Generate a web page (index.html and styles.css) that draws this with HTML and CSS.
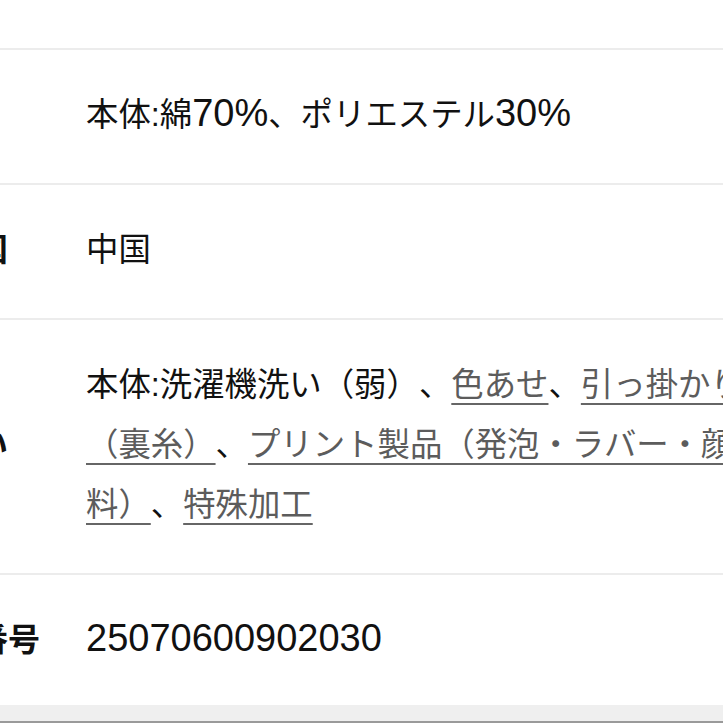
FILE: index.html
```html
<!DOCTYPE html>
<html lang="ja">
<head>
<meta charset="utf-8">
<title>商品情報</title>
<link rel="stylesheet" href="styles.css">
</head>
<body>
<div class="spec">
  <div class="spec-top"></div>
  <div class="row">
    <div class="label">素材</div>
    <div class="value">本体:綿<span class="num">70%</span>、ポリエステル<span class="num">30%</span></div>
  </div>
  <div class="row">
    <div class="label">原産国</div>
    <div class="value">中国</div>
  </div>
  <div class="row">
    <div class="label">取扱い</div>
    <div class="value">本体:洗濯機洗い（弱）、<a href="#">色あせ</a>、<a href="#">引っ掛かり（裏糸）</a>、<a href="#">プリント製品（発泡・ラバー・顔料）</a>、<a href="#">特殊加工</a></div>
  </div>
  <div class="row">
    <div class="label">商品番号</div>
    <div class="value"><span class="num">25070600902030</span></div>
  </div>
</div>
<div class="bottom-bar"></div>
</body>
</html>
```

FILE: styles.css
```css
html, body {
  margin: 0;
  padding: 0;
  background: #ffffff;
  overflow: hidden;
}

body {
  width: 723px;
  height: 723px;
  font-family: "Liberation Sans", "Noto Sans CJK JP", sans-serif;
  color: #111111;
}

.spec {
  margin-left: -88px;
  width: 860px;
}

.spec-top {
  height: 48px;
}

.row {
  display: flex;
  align-items: center;
  border-top: 2px solid #ececec;
  padding: 35px 0 38px;
}

.label {
  width: 174px;
  flex: none;
  font-size: 32px;
  line-height: 60px;
  font-weight: 700;
  color: #111111;
}

.value {
  width: 666px;
  flex: none;
  font-size: 32.4px;
  line-height: 60px;
  color: #111111;
  text-spacing-trim: space-all;
}

.num {
  font-size: 38px;
  line-height: 1;
}

.value a {
  color: #5c5c5c;
  text-decoration: underline;
  text-decoration-color: #666666;
  text-decoration-thickness: 2px;
  text-underline-offset: 7px;
}

.bottom-bar {
  position: fixed;
  left: 0;
  right: 0;
  bottom: 0;
  height: 16px;
  background: #efefef;
  border-bottom: 2px solid #9a9a9a;
}
```
